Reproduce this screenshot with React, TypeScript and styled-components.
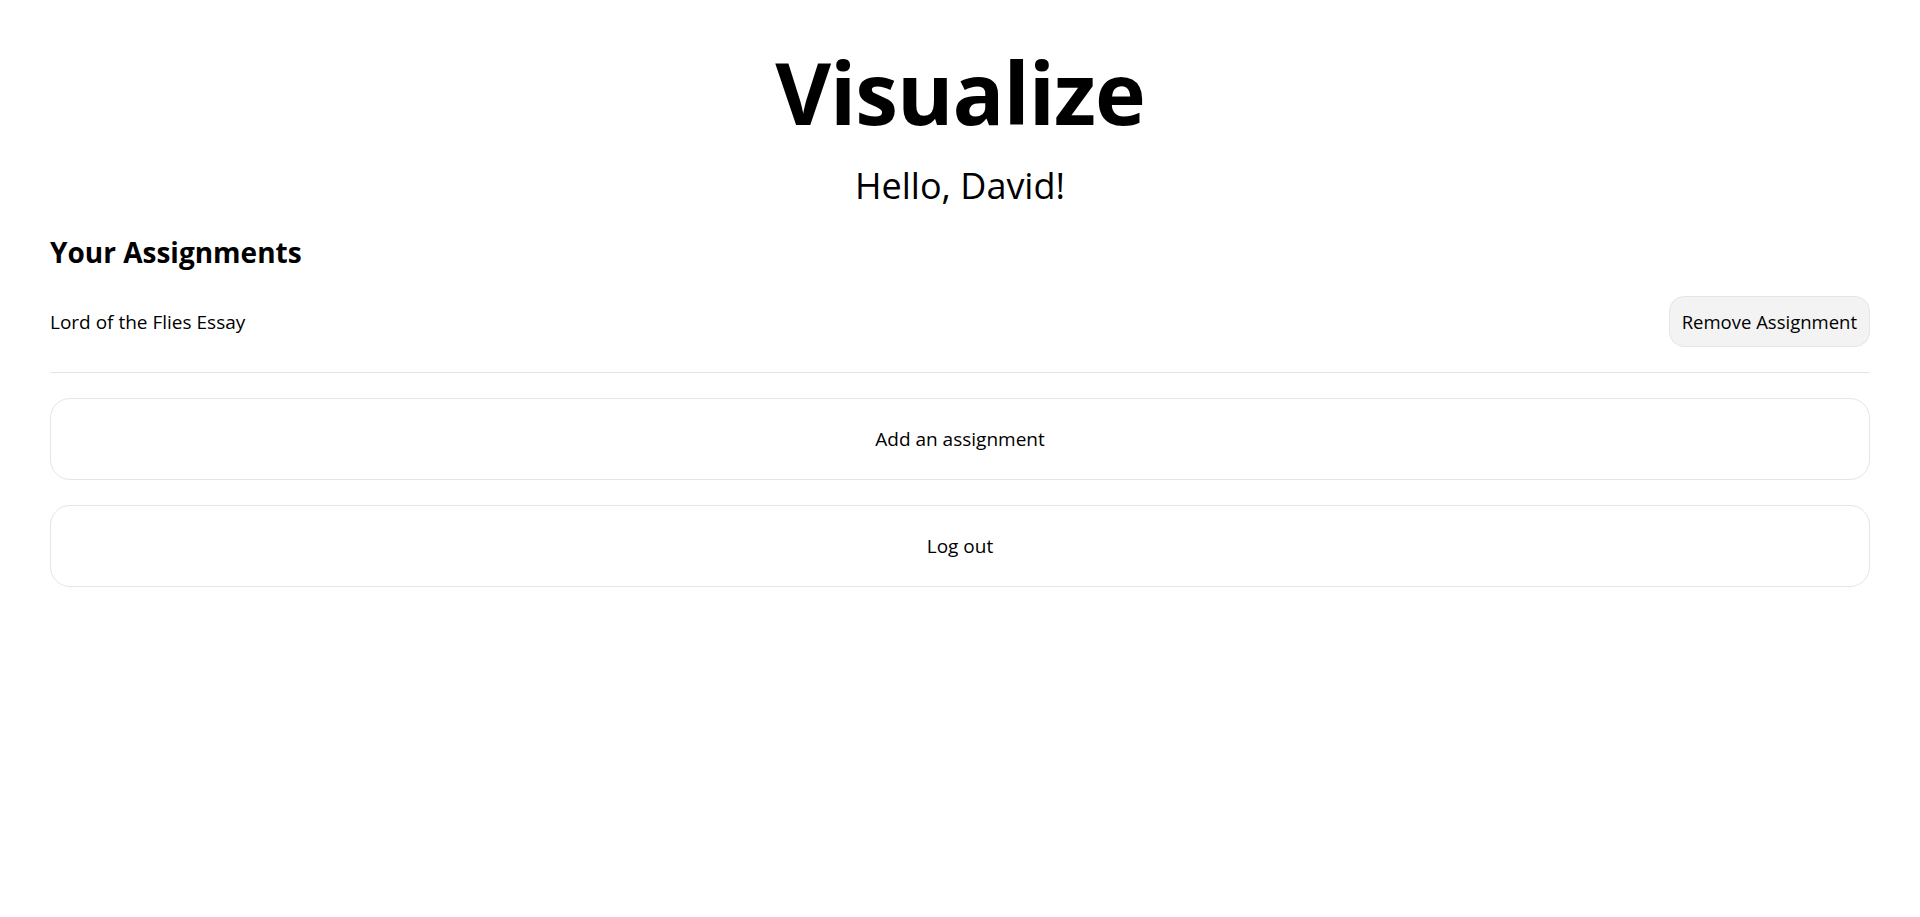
import styled, { createGlobalStyle } from "styled-components";

const GlobalStyle = createGlobalStyle`
  body {
    margin: 0;
    background: #ffffff;
    color: #000000;
    font-family: "Open Sans", "Noto Sans", sans-serif;
  }
`;

const assignments = ["Lord of the Flies Essay"];

const App = () => {
  return (
    <>
      <GlobalStyle />
      <Page>
        <Header>
          <Title>Visualize</Title>
          <Greeting>Hello, David!</Greeting>
        </Header>
        <SectionTitle>Your Assignments</SectionTitle>
        <List>
          {assignments.map((name) => (
            <Row key={name}>
              <RowName>{name}</RowName>
              <RemoveButton>Remove Assignment</RemoveButton>
            </Row>
          ))}
        </List>
        <Actions>
          <WideButton>Add an assignment</WideButton>
          <WideButton>Log out</WideButton>
        </Actions>
      </Page>
    </>
  );
};

const Page = styled.main`
  display: flex;
  flex-direction: column;
  padding: 0 50px;
`;

const Header = styled.header`
  display: flex;
  flex-direction: column;
  align-items: center;
  padding-top: 42px;
`;

const Title = styled.h1`
  margin: 0;
  font-size: 86px;
  font-weight: 700;
  line-height: 100px;
  letter-spacing: -1px;
`;

const Greeting = styled.p`
  margin: 22px 0 0;
  font-size: 36px;
  font-weight: 400;
  line-height: 44px;
`;

const SectionTitle = styled.h2`
  margin: 26px 0 0;
  font-size: 28px;
  font-weight: 700;
  line-height: 36px;
`;

const List = styled.ul`
  list-style: none;
  margin: 26px 0 0;
  padding: 0;
`;

const Row = styled.li`
  display: flex;
  align-items: center;
  justify-content: space-between;
  padding-bottom: 25px;
  border-bottom: 1px solid #e5e5e5;
`;

const RowName = styled.span`
  font-size: 19px;
  line-height: 26px;
`;

const RemoveButton = styled.button`
  height: 51px;
  padding: 0 12px;
  border: 1px solid #e5e5e5;
  border-radius: 15px;
  background: #f3f3f3;
  color: #000;
  font-family: inherit;
  font-size: 18.5px;
  cursor: pointer;
`;

const Actions = styled.div`
  display: flex;
  flex-direction: column;
  gap: 25px;
  margin-top: 25px;
`;

const WideButton = styled.button`
  height: 82px;
  width: 100%;
  border: 1px solid #e5e5e5;
  border-radius: 20px;
  background: #ffffff;
  color: #000;
  font-family: inherit;
  font-size: 19px;
  cursor: pointer;
`;

export default App;
